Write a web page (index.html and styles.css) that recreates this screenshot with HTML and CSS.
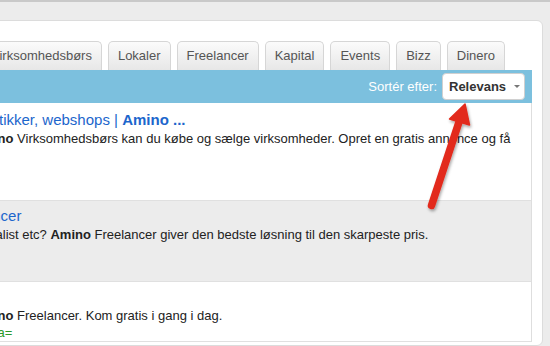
FILE: index.html
```html
<!DOCTYPE html>
<html lang="da">
<head>
    <meta charset="UTF-8">
    <meta name="viewport" content="width=device-width, initial-scale=1.0">
    <title>Amino - Søgning</title>
    <link rel="stylesheet" href="styles.css">
</head>
<body>
    <div class="panel">
        <ul class="tabs">
            <li class="tab">Virksomhedsbørs</li>
            <li class="tab">Lokaler</li>
            <li class="tab">Freelancer</li>
            <li class="tab">Kapital</li>
            <li class="tab">Events</li>
            <li class="tab">Bizz</li>
            <li class="tab">Dinero</li>
        </ul>
        <div class="sortbar">
            <span class="sort-label">Sortér efter:</span>
            <div class="select">
                <span>Relevans</span>
                <span class="caret"></span>
            </div>
        </div>
        <div class="results">
            <div class="result result-first">
                <a class="result-title title-cut-1" href="#">statistikker, webshops | <b>Amino ...</b></a>
                <p class="result-desc"><b>Amino</b> Virksomhedsbørs kan du købe og sælge virksomheder. Opret en gratis annonce og få</p>
            </div>
            <div class="result result-grey">
                <a class="result-title title-cut-2" href="#">Amino Freelancer</a>
                <p class="result-desc desc-cut-2">Specialist etc? <b>Amino</b> Freelancer giver den bedste løsning til den skarpeste pris.</p>
            </div>
            <div class="result">
                <a class="result-title" href="#">&nbsp;</a>
                <p class="result-desc"><b>Amino</b> Freelancer. Kom gratis i gang i dag.</p>
                <p class="result-url">dk/?a=</p>
            </div>
        </div>
    </div>

    <!-- arrow pointing at the sort select -->
    <svg class="arrow" width="550" height="346" viewBox="0 0 550 346">
        <defs>
            <filter id="shadow" x="-20%" y="-20%" width="140%" height="140%">
                <feDropShadow dx="1" dy="2" stdDeviation="1.5" flood-color="#000" flood-opacity="0.35"/>
            </filter>
        </defs>
        <g filter="url(#shadow)">
            <line x1="431.5" y1="205.5" x2="459" y2="122" stroke="#e22a1c" stroke-width="7.5" stroke-linecap="round"/>
            <polygon points="465,104 469.5,125 449.5,119" fill="#e22a1c" stroke="#e22a1c" stroke-width="1.5" stroke-linejoin="round"/>
        </g>
    </svg>
</body>
</html>
```

FILE: styles.css
```css
body {
    margin: 0;
    height: 346px;
    overflow: hidden;
    background: #ececec;
    border-top: 2px solid #c9c9c9;
    box-sizing: border-box;
    font-family: "Liberation Sans", Arial, sans-serif;
    color: #222;
}

.panel {
    box-sizing: border-box;
    margin: 18px 7px 0 -60px;
    padding: 20px 10px 0 10px;
    height: 326px;
    overflow: hidden;
    background: #fff;
    border: 1px solid #dcdcdc;
    border-radius: 6px;
}

/* tabs */
.tabs {
    display: flex;
    margin: 0;
    padding: 0 0 0 30px;
    list-style: none;
}

.tab {
    box-sizing: border-box;
    height: 29px;
    padding: 0 9px;
    margin-right: 6px;
    line-height: 28px;
    font-size: 13px;
    color: #555;
    white-space: nowrap;
    border: 1px solid #d6d6d6;
    border-bottom: none;
    border-radius: 5px 5px 0 0;
    background: linear-gradient(#fbfbfb, #e7e7e7);
}

/* sort bar */
.sortbar {
    display: flex;
    align-items: center;
    justify-content: flex-end;
    height: 33px;
    padding-right: 7px;
    background: #7cc0de;
}

.sort-label {
    margin-right: 5px;
    font-size: 13px;
    color: #fff;
}

.select {
    box-sizing: border-box;
    display: flex;
    align-items: center;
    justify-content: space-between;
    width: 83px;
    height: 27px;
    padding: 0 4px 0 6px;
    background: #fff;
    border: 1px solid #d0d0d0;
    border-radius: 4px;
    font-size: 13px;
    font-weight: bold;
    color: #333;
}

.caret {
    width: 0;
    height: 0;
    border-top: 3px solid #777;
    border-left: 3px solid transparent;
    border-right: 3px solid transparent;
}

/* results */
.results {
    padding-top: 2px;
    border-right: 1px solid #dedede;
}

.result {
    box-sizing: border-box;
    padding: 6px 0 0 22px;
    border-bottom: 1px solid #e0e0e0;
    white-space: nowrap;
    overflow: hidden;
}

.result-first {
    height: 96px;
}

.result-grey {
    height: 81px;
    background: #ececec;
}

.result-title {
    display: block;
    font-size: 15px;
    line-height: 18px;
    color: #1c66cc;
    text-decoration: none;
}

.result-desc {
    margin: 0;
    font-size: 13px;
    line-height: 19px;
}

.result-url {
    margin: 0;
    font-size: 13px;
    line-height: 16px;
    color: #2b9a2b;
}

/* the screenshot is cropped on the left, these lines start earlier */
.title-cut-1 {
    margin-left: -9px;
}

.title-cut-2 {
    margin-left: -70px;
}

.desc-cut-2 {
    margin-left: -10px;
}

.arrow {
    position: absolute;
    top: 0;
    left: 0;
    pointer-events: none;
}
```
